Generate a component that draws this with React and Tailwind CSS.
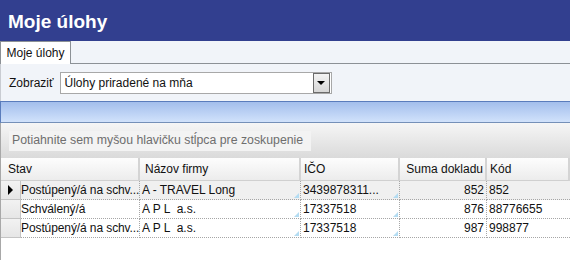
import React from 'react';

const rows = [
  { stav: 'Postúpený/á na schv...', firma: 'A - TRAVEL Long', ico: '3439878311...', suma: '852', kod: '852', current: true },
  { stav: 'Schválený/á', firma: 'A P L  a.s.', ico: '17337518', suma: '876', kod: '88776655' },
  { stav: 'Postúpený/á na schv...', firma: 'A P L  a.s.', ico: '17337518', suma: '987', kod: '998877' },
];

function Corner() {
  return <span className="absolute right-[1px] bottom-[1px] w-0 h-0 border-l-[5px] border-l-transparent border-b-[5px] border-b-[#b3dcf2]" />;
}

function HeaderCell({ children, className = '' }) {
  return (
    <div className={`h-full flex items-center whitespace-nowrap bg-gradient-to-b from-[#fdfdfd] to-[#ececec] border-r-2 border-r-[#d4d4d4] border-b border-b-[#d0d0d0] ${className}`}>
      {children}
    </div>
  );
}

export default function App() {
  return (
    <div className="w-[570px] h-[260px] overflow-hidden bg-white text-[12px] text-[#111]" style={{ fontFamily: '"Liberation Sans", Arial, sans-serif' }}>
      <div className="h-[41px] bg-[#323f8f] flex items-center px-[8px] pt-[2px]">
        <h1 className="text-white font-bold text-[19px] leading-none">Moje úlohy</h1>
      </div>

      <div className="h-[23px] bg-[#f1f4f9] flex items-end">
        <div className="h-[23px] w-[71px] bg-white border border-b-0 border-[#8c9196] flex items-center justify-center text-[12px]">Moje úlohy</div>
        <div className="flex-1 border-b border-[#8c9196]" />
      </div>

      <div className="h-[37px] bg-[#f1f4f9] flex items-center gap-[6px] pl-[8px] border-l border-[#c9ccd2]">
        <span>Zobraziť</span>
        <div className="w-[272px] h-[22px] bg-white border border-[#a8a8a8] flex items-center justify-between pl-[4px] pr-[1px]">
          <span>Úlohy priradené na mňa</span>
          <div className="w-[17px] h-[20px] border border-[#6b6b6b] bg-gradient-to-b from-[#f3f3f3] to-[#d6d6d6] flex items-center justify-center">
            <span className="w-0 h-0 border-l-[4px] border-r-[4px] border-t-[4px] border-l-transparent border-r-transparent border-t-black" />
          </div>
        </div>
      </div>

      <div className="h-[22px] bg-gradient-to-b from-[#a3beec] to-[#d1e2fb] border-t border-t-[#5a7cbc] border-b border-b-[#7590b8] border-l border-l-[#5a7cbc]" />

      <div className="h-[35px] bg-gradient-to-b from-[#f6f6f6] to-[#dadada] flex items-center pl-[8px] border-l border-[#a8a8a8]">
        <div className="w-[302px] h-[20px] bg-[#f3f3f3] flex items-center pl-[3px] text-[#6e6e6e] text-[12.3px] whitespace-nowrap">
          Potiahnite sem myšou hlavičku stĺpca pre zoskupenie
        </div>
      </div>

      <div className="border-l border-[#a8a8a8] h-full">
        <div className="h-[23px] flex bg-[#dcdcdc]">
          <HeaderCell className="w-[139px] pl-[7px]">Stav</HeaderCell>
          <HeaderCell className="w-[161px] pl-[5px]">Názov firmy</HeaderCell>
          <HeaderCell className="w-[99px] pl-[3px]">IČO</HeaderCell>
          <HeaderCell className="w-[87px] justify-end pr-[2px]">Suma dokladu</HeaderCell>
          <HeaderCell className="flex-1 border-r-0 pl-[3px]">Kód</HeaderCell>
        </div>

        {rows.map((r, i) => (
          <div key={i} className={`h-[19px] flex ${r.current ? 'bg-[#f0f0f0]' : 'bg-white'}`}>
            <div className="w-[20px] h-full bg-gradient-to-b from-[#f2f2f2] to-[#e6e6e6] border-r border-b border-[#c4c4c4] flex items-center justify-center">
              {r.current && <span className="w-0 h-0 border-t-[5px] border-b-[5px] border-l-[5px] border-t-transparent border-b-transparent border-l-black" />}
            </div>
            <div className="w-[119px] h-full flex items-center border-r border-b border-dotted border-[#a6a6a6] whitespace-nowrap tracking-[-0.1px]">{r.stav}</div>
            <div className="relative w-[161px] h-full flex items-center pl-[2px] border-r border-b border-dotted border-[#a6a6a6] whitespace-pre">{r.firma}<Corner /></div>
            <div className="relative w-[99px] h-full flex items-center pl-[2px] border-r border-b border-dotted border-[#a6a6a6] whitespace-nowrap">{r.ico}<Corner /></div>
            <div className="w-[87px] h-full flex items-center justify-end pr-[2px] border-r border-b border-dotted border-[#a6a6a6]">{r.suma}</div>
            <div className="flex-1 h-full flex items-center pl-[2px] border-b border-dotted border-[#a6a6a6]">{r.kod}</div>
          </div>
        ))}
      </div>
    </div>
  );
}
